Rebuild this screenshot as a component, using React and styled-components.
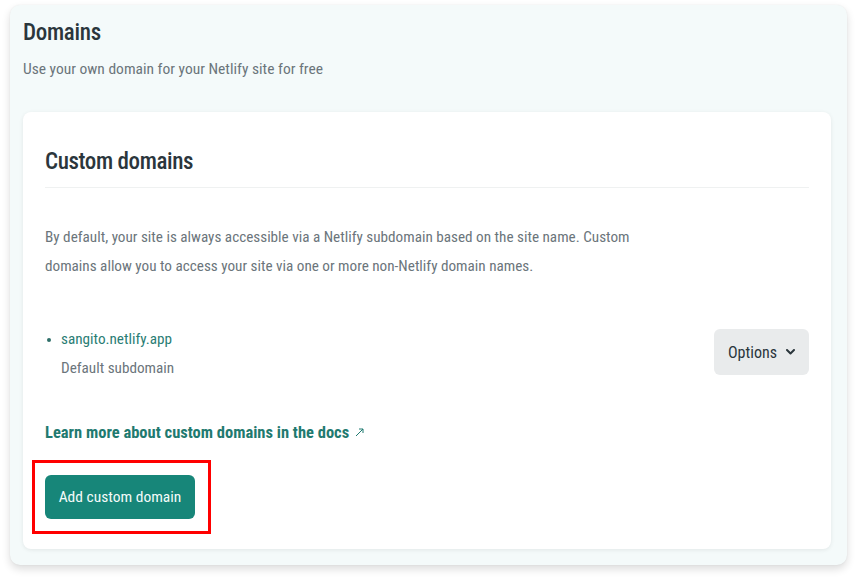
import React from "react";
import styled, { createGlobalStyle } from "styled-components";

const GlobalStyle = createGlobalStyle`
  body {
    margin: 0;
    background: #ffffff;
    font-family: "Roboto Condensed", "Liberation Sans", sans-serif;
    color: #2e3a40;
  }
`;

const Page = styled.div`
  padding: 5px 10px 13px;
`;

const Panel = styled.section`
  background: #f4fafa;
  border-radius: 10px;
  box-shadow: 0 4px 9px rgba(0, 0, 0, 0.14), 0 0 2px rgba(0, 0, 0, 0.06);
  padding: 13px 16px 16px 13px;
`;

const PanelTitle = styled.h1`
  margin: 0;
  font-size: 23px;
  line-height: 30px;
  font-weight: 500;
  letter-spacing: -0.3px;
  color: #2b363c;
`;

const PanelSubtitle = styled.p`
  margin: 7px 0 28px;
  font-size: 15.5px;
  line-height: 29px;
  color: #6b757b;
`;

const Card = styled.div`
  background: #ffffff;
  border-radius: 8px;
  box-shadow: 0 1px 4px rgba(0, 0, 0, 0.08);
  padding: 35px 22px 15px;
`;

const CardHeader = styled.header`
  padding-bottom: 10px;
  border-bottom: 1px solid #eff1f1;
`;

const CardTitle = styled.h2`
  margin: 0;
  font-size: 23px;
  line-height: 30px;
  font-weight: 500;
  letter-spacing: -0.4px;
  color: #2b363c;
`;

const Text = styled.p`
  margin: ${(p) => p.$margin || 0};
  font-size: 15.2px;
  line-height: 29px;
  color: #6b757b;
`;

const DomainRow = styled.div`
  margin-top: 44px;
  display: flex;
  align-items: flex-start;
  justify-content: space-between;
`;

const DomainList = styled.ul`
  margin: 0;
  padding: 0;
  list-style: none;
`;

const DomainItem = styled.li`
  display: grid;
  grid-template-columns: 16px auto;
  align-items: center;
`;

const Bullet = styled.span`
  width: 4px;
  height: 4px;
  margin-left: 2px;
  border-radius: 50%;
  background: #2f6f69;
`;

const DomainName = styled.span`
  font-size: 15.2px;
  line-height: 29px;
  color: #2a7d74;
`;

const DomainNote = styled.span`
  grid-column: 2;
  font-size: 15.2px;
  line-height: 29px;
  color: #6b757b;
`;

const OptionsButton = styled.button`
  display: flex;
  align-items: center;
  gap: 9px;
  height: 46px;
  margin-top: 4px;
  padding: 0 14px;
  border: none;
  border-radius: 6px;
  background: #e9ebec;
  font-family: inherit;
  font-size: 16px;
  color: #2b363c;
`;

const DocsLink = styled.a`
  display: inline-flex;
  align-items: center;
  gap: 6px;
  margin-top: 35px;
  font-size: 16.5px;
  line-height: 29px;
  font-weight: 700;
  color: #1f7a70;
  text-decoration: none;
`;

const Highlight = styled.div`
  display: inline-block;
  margin: 13px 0 0 -13px;
  padding: 12px 13px 12px 10px;
  border: 3px solid #ff0000;
`;

const PrimaryButton = styled.button`
  display: block;
  width: 150px;
  height: 44px;
  border: none;
  border-radius: 6px;
  background: #178679;
  font-family: inherit;
  font-size: 15.5px;
  color: #f4fbfa;
`;

const Chevron = () => (
  <svg width="9" height="6" viewBox="0 0 9 6" fill="none">
    <path d="M1 1l3.5 3.5L8 1" stroke="#2b363c" strokeWidth="2" strokeLinecap="round" strokeLinejoin="round" />
  </svg>
);

const ExternalArrow = () => (
  <svg width="9" height="9" viewBox="0 0 9 9" fill="none">
    <path d="M1 8L8 1M4 1h4v4" stroke="#1f7a70" strokeWidth="1" />
  </svg>
);

export default function App() {
  return (
    <Page>
      <GlobalStyle />
      <Panel>
        <PanelTitle>Domains</PanelTitle>
        <PanelSubtitle>Use your own domain for your Netlify site for free</PanelSubtitle>
        <Card>
          <CardHeader>
            <CardTitle>Custom domains</CardTitle>
          </CardHeader>
          <Text $margin="35px 0 0">
            By default, your site is always accessible via a Netlify subdomain based on the site name. Custom
            <br />
            domains allow you to access your site via one or more non-Netlify domain names.
          </Text>
          <DomainRow>
            <DomainList>
              <DomainItem>
                <Bullet />
                <DomainName>sangito.netlify.app</DomainName>
                <DomainNote>Default subdomain</DomainNote>
              </DomainItem>
            </DomainList>
            <OptionsButton>
              Options
              <Chevron />
            </OptionsButton>
          </DomainRow>
          <DocsLink href="#">
            Learn more about custom domains in the docs
            <ExternalArrow />
          </DocsLink>
          <div>
            <Highlight>
              <PrimaryButton>Add custom domain</PrimaryButton>
            </Highlight>
          </div>
        </Card>
      </Panel>
    </Page>
  );
}
